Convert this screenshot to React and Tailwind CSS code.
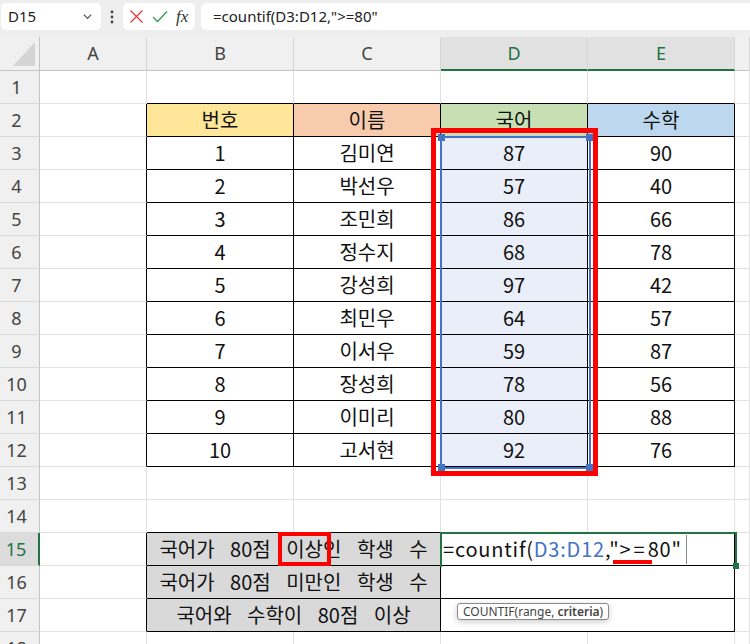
import React from 'react';
import clsx from 'clsx';

const CELL_FONT = { fontFamily: '"Noto Sans CJK KR", "Noto Sans", sans-serif' };
const UI_FONT = { fontFamily: '"Noto Sans", "Noto Sans CJK KR", sans-serif' };

const STUDENTS = [
  ['1', '김미연', '87', '90'],
  ['2', '박선우', '57', '40'],
  ['3', '조민희', '86', '66'],
  ['4', '정수지', '68', '78'],
  ['5', '강성희', '97', '42'],
  ['6', '최민우', '64', '57'],
  ['7', '이서우', '59', '87'],
  ['8', '장성희', '78', '56'],
  ['9', '이미리', '80', '88'],
  ['10', '고서현', '92', '76'],
];

const COLS = ['A', 'B', 'C', 'D', 'E', ''];

// r / b: 'k' = black table border, anything else = light gridline
const Cell = ({ span, r, b, bg, className, children }) => (
  <div
    className={clsx(
      'flex items-center justify-center border-r border-b text-[20px] text-[#111] whitespace-nowrap',
      r === 'k' ? 'border-r-black' : 'border-r-[#e1e1e1]',
      b === 'k' ? 'border-b-black' : 'border-b-[#e1e1e1]',
      span && 'col-span-2',
      bg || 'bg-white',
      className
    )}
  >
    {children}
  </div>
);

const RowHead = ({ n, active }) => (
  <div
    className={clsx(
      'flex items-center justify-center pr-[6px] border-b border-b-[#dadada] text-[18px]',
      active
        ? 'bg-[#dcdcdc] text-[#217346] border-r-2 border-r-[#217346]'
        : 'bg-[#f0f0f0] text-[#444] border-r border-r-[#c4c4c4]'
    )}
    style={UI_FONT}
  >
    {n}
  </div>
);

const FormulaBar = () => (
  <div className="h-[37px] bg-[#eeeeee] flex items-start pt-[3px] text-[15px] text-[#222]" style={UI_FONT}>
    <div className="ml-[1px] w-[100px] h-[27px] bg-white rounded-[5px] flex items-center justify-between pl-[7px] pr-[8px]">
      <span>D15</span>
      <svg width="11" height="11" viewBox="0 0 12 12" fill="none" stroke="#555" strokeWidth="1.4">
        <path d="M2 4l4 4 4-4" />
      </svg>
    </div>
    <div className="w-[22px] h-[27px] flex items-center justify-center">
      <svg width="4" height="14" viewBox="0 0 4 14" fill="#444">
        <circle cx="2" cy="2" r="1.4" />
        <circle cx="2" cy="7" r="1.4" />
        <circle cx="2" cy="12" r="1.4" />
      </svg>
    </div>
    <div className="w-[72px] h-[27px] bg-white rounded-[5px] flex items-center gap-[8px] pl-[6px]">
      <svg width="15" height="15" viewBox="0 0 15 15" stroke="#e0383e" strokeWidth="1.3">
        <path d="M1.5 1.5l12 12M13.5 1.5l-12 12" />
      </svg>
      <svg width="16" height="13" viewBox="0 0 16 13" fill="none" stroke="#3a9a54" strokeWidth="1.3">
        <path d="M1 7l4.5 4.5L15 1.5" />
      </svg>
      <span className="italic text-[17px] text-[#333]" style={{ fontFamily: '"Liberation Serif", serif' }}>
        fx
      </span>
    </div>
    <div className="ml-[6px] flex-1 h-[27px] bg-white rounded-l-[5px] flex items-center pl-[12px]">
      =countif(D3:D12,"&gt;=80"
    </div>
  </div>
);

const HeaderRow = () => (
  <>
    <div className="bg-[#f0f0f0] border-r border-r-[#c4c4c4] border-b border-b-[#c4c4c4] flex items-end justify-end pr-[4px] pb-[4px]">
      <svg width="22" height="24" viewBox="0 0 22 24">
        <polygon points="22,0 22,24 0,24" fill="#d4d4d4" />
      </svg>
    </div>
    {COLS.map((c) => {
      const sel = c === 'D' || c === 'E';
      return (
        <div
          key={c || 'F'}
          className={clsx(
            'flex items-center justify-center text-[18px] border-r border-r-[#d6d6d6]',
            sel
              ? 'bg-[#e1e1e1] text-[#217346] border-b-2 border-b-[#217346]'
              : 'bg-[#f0f0f0] text-[#444] border-b border-b-[#c4c4c4]'
          )}
          style={UI_FONT}
        >
          {c}
        </div>
      );
    })}
  </>
);

export default function App() {
  const headBg = ['bg-[#ffe699]', 'bg-[#f8cbad]', 'bg-[#c6e0b4]', 'bg-[#bdd7ee]'];
  const headText = ['번호', '이름', '국어', '수학'];

  return (
    <div className="relative w-[750px] h-[644px] overflow-hidden bg-white">
      <FormulaBar />
      <div
        className="grid grid-cols-[40px_107px_147px_147px_147px_147px_1fr] grid-rows-[34px_repeat(18,33px)]"
        style={CELL_FONT}
      >
        <HeaderRow />

        {/* row 1 */}
        <RowHead n={1} />
        <Cell />
        <Cell b="k" />
        <Cell b="k" />
        <Cell b="k" />
        <Cell b="k" />
        <Cell />

        {/* row 2 : table head */}
        <RowHead n={2} />
        <Cell r="k" />
        {headText.map((t, i) => (
          <Cell key={t} r="k" b="k" bg={headBg[i]}>
            {t}
          </Cell>
        ))}
        <Cell />

        {/* rows 3-12 */}
        {STUDENTS.map((s, i) => (
          <React.Fragment key={s[0]}>
            <RowHead n={i + 3} />
            <Cell r="k" />
            <Cell r="k" b="k">{s[0]}</Cell>
            <Cell r="k" b="k">{s[1]}</Cell>
            <Cell r="k" b="k" bg="bg-[#e9eef8]">{s[2]}</Cell>
            <Cell r="k" b="k">{s[3]}</Cell>
            <Cell />
          </React.Fragment>
        ))}

        {/* row 13 */}
        <RowHead n={13} />
        <Cell />
        <Cell />
        <Cell />
        <Cell />
        <Cell />
        <Cell />

        {/* row 14 */}
        <RowHead n={14} />
        <Cell />
        <Cell b="k" />
        <Cell b="k" />
        <Cell b="k" />
        <Cell b="k" />
        <Cell />

        {/* row 15 */}
        <RowHead n={15} active />
        <Cell r="k" />
        <Cell span r="k" b="k" bg="bg-[#d9d9d9]">
          <span className="[word-spacing:11px]">
            국어가 80점{' '}
            <span className="relative [word-spacing:0]">
              이상
              <span className="absolute -left-[8px] -right-[8px] top-[-2px] bottom-[-3px] border-[4px] border-[#f00]" />
            </span>
            인 학생 수
          </span>
        </Cell>
        <Cell span r="k" b="k" className="!justify-start pl-[2px]">
          <span className="text-[20px] tracking-[0.8px]">
            =countif(<span className="text-[#4472c4]">D3:D12</span>,"
            <span className="relative tracking-[3px]">
              &gt;=
              <span className="absolute -left-[6px] right-[-4px] bottom-[-1px] h-[4px] bg-[#f00]" />
            </span>
            80"
          </span>
          <span className="ml-[4px] inline-block w-px h-[29px] bg-[#8a8a8a]" />
        </Cell>
        <Cell />

        {/* row 16 */}
        <RowHead n={16} />
        <Cell r="k" />
        <Cell span r="k" b="k" bg="bg-[#d9d9d9]">
          <span className="[word-spacing:11px]">국어가 80점 미만인 학생 수</span>
        </Cell>
        <Cell span r="k" b="k" />
        <Cell />

        {/* row 17 */}
        <RowHead n={17} />
        <Cell r="k" />
        <Cell span r="k" b="k" bg="bg-[#d9d9d9]">
          <span className="[word-spacing:11px]">국어와 수학이 80점 이상</span>
        </Cell>
        <Cell span r="k" b="k" />
        <Cell />

        {/* row 18 */}
        <RowHead n={18} />
        <Cell />
        <Cell />
        <Cell />
        <Cell />
        <Cell />
        <Cell />
      </div>

      {/* formula range highlight D3:D12 */}
      <div className="absolute left-[440px] top-[136px] w-[151px] h-[333px] border-2 border-[#4472c4]" />
      <div className="absolute left-[438px] top-[134px] w-[7px] h-[7px] bg-[#4472c4]" />
      <div className="absolute left-[586px] top-[134px] w-[7px] h-[7px] bg-[#4472c4]" />
      <div className="absolute left-[438px] top-[464px] w-[7px] h-[7px] bg-[#4472c4]" />
      <div className="absolute left-[586px] top-[464px] w-[7px] h-[7px] bg-[#4472c4]" />

      {/* red annotation box */}
      <div className="absolute left-[431px] top-[128px] w-[167px] h-[348px] border-[5px] border-[#f00]" />

      {/* active cell D15:E15 */}
      <div className="absolute left-[440px] top-[532px] w-[297px] h-[35px] border-t-2 border-l-2 border-r-2 border-[#217346]" />
      <div className="absolute left-[733px] top-[563px] w-[6px] h-[6px] bg-[#217346]" />

      {/* function tooltip */}
      <div
        className="absolute left-[457px] top-[603px] h-[17px] px-[5px] flex items-center bg-white border border-[#8a8a8a] rounded-[3px] shadow-[0_2px_6px_rgba(0,0,0,0.2)] text-[12px] text-[#444] whitespace-nowrap"
        style={UI_FONT}
      >
        COUNTIF(range, <b className="ml-[3px] font-semibold">criteria</b>)
      </div>
    </div>
  );
}
